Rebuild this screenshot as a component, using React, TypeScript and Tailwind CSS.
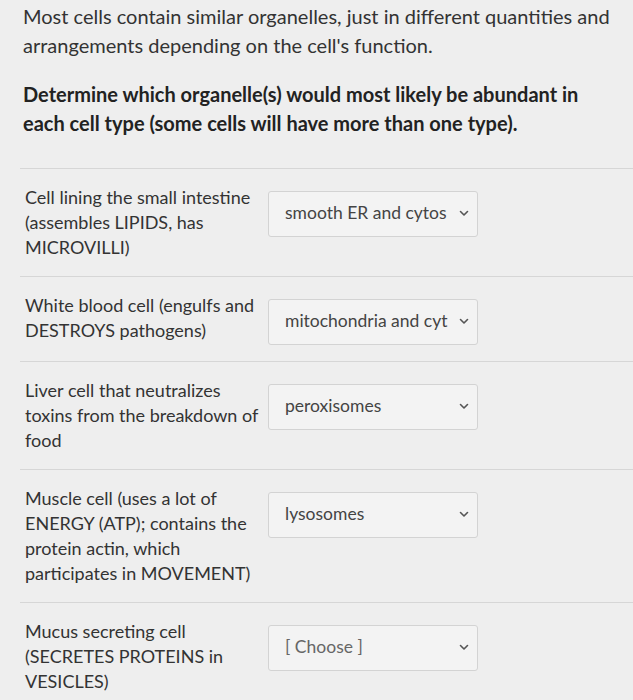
import React from "react";

const rows: { label: string; value: string; muted?: boolean }[] = [
  { label: "Cell lining the small intestine (assembles LIPIDS, has MICROVILLI)", value: "smooth ER and cytos" },
  { label: "White blood cell (engulfs and DESTROYS pathogens)", value: "mitochondria and cyt" },
  { label: "Liver cell that neutralizes toxins from the breakdown of food", value: "peroxisomes" },
  { label: "Muscle cell (uses a lot of ENERGY (ATP); contains the protein actin, which participates in MOVEMENT)", value: "lysosomes" },
  { label: "Mucus secreting cell (SECRETES PROTEINS in VESICLES)", value: "[ Choose ]", muted: true },
];

function Chevron() {
  return (
    <svg width="10" height="7" viewBox="0 0 10 7" fill="none" className="shrink-0">
      <path d="M1.5 1.5 L5 5 L8.5 1.5" stroke="#555" strokeWidth="1.6" strokeLinecap="round" strokeLinejoin="round" />
    </svg>
  );
}

export default function App() {
  return (
    <div
      className="w-[633px] h-[700px] overflow-hidden bg-[#eeeeee] text-[#2e2e2e]"
      style={{ fontFamily: "Lato, 'Open Sans', sans-serif" }}
    >
      <div className="pl-[23px] pr-[10px] pt-[2px]">
        <p className="text-[20px] leading-[29px] text-[#333]">
          Most cells contain similar organelles, just in different quantities and arrangements depending on the cell's function.
        </p>
        <p className="mt-[20px] text-[20px] leading-[29px] font-bold text-[#222]">
          Determine which organelle(s) would most likely be abundant in each cell type (some cells will have more than one type).
        </p>
      </div>
      <div className="mt-[30px] ml-[20px]">
        {rows.map((r, i) => (
          <div key={i} className="flex items-start border-t border-[#d6d6d6] pt-[16px] pb-[16px] pl-[5px]">
            <div className="w-[240px] text-[18px] leading-[25px] text-[#333]">{r.label}</div>
            <div className="ml-[3px] mt-[6px] w-[210px] h-[46px] border border-[#d3d3d3] rounded-[3px] bg-[#f3f3f3] flex items-center justify-between pl-[16px] pr-[8px] pb-[2px]">
              <span className={"text-[17.5px] " + (r.muted ? "text-[#666]" : "text-[#444]")}>{r.value}</span>
              <Chevron />
            </div>
          </div>
        ))}
      </div>
    </div>
  );
}
